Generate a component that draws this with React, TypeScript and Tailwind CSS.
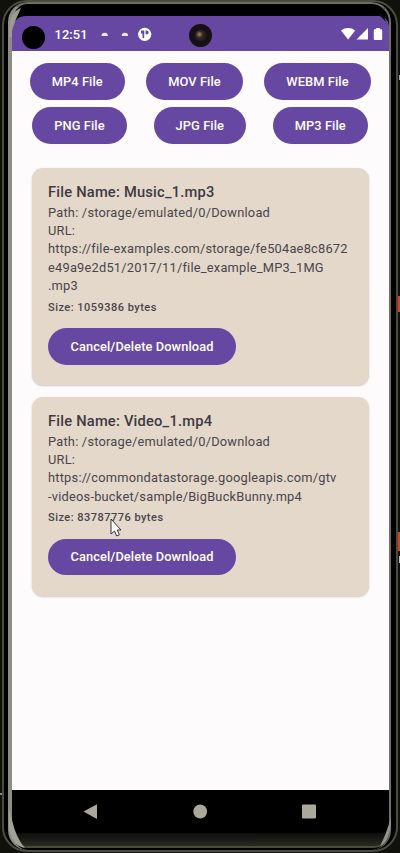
import React from "react";

function FormatButton({ label, className }: { label: string; className: string }) {
  return (
    <button
      className={`h-[36.5px] shrink-0 rounded-full bg-[#6648a3] text-[12.83px] font-medium tracking-[0.09px] whitespace-nowrap text-white ${className}`}
    >
      {label}
    </button>
  );
}

interface DownloadProps {
  name: string;
  urlLines: string[];
  size: string;
  className: string;
}

function DownloadCard({ name, urlLines, size, className }: DownloadProps) {
  return (
    <section
      className={`mx-5 rounded-[11px] bg-[#e3d8ca] px-4 pt-[13px] text-[#4a454c] shadow-[0_1px_2px_rgba(90,80,70,0.3)] ${className}`}
    >
      <h2 className="h-[22px] text-[14.67px] leading-[22px] font-medium tracking-[0.22px] whitespace-nowrap text-[#3f3a42]">
        File Name: {name}
      </h2>
      <div className="pt-[0.5px] text-[12.83px] leading-[18.4px] tracking-[0.22px] whitespace-nowrap">
        <p>Path: /storage/emulated/0/Download</p>
        <p>URL:</p>
        {urlLines.map((line) => (
          <p key={line}>{line}</p>
        ))}
      </div>
      <p className="mt-[4px] text-[11px] leading-[15px] font-medium tracking-[0.48px]">Size: {size} bytes</p>
      <button className="mt-[13.5px] block h-[36.5px] w-[188px] rounded-full bg-[#6648a3] text-[12.83px] font-medium tracking-[0.09px] whitespace-nowrap text-white">
        Cancel/Delete Download
      </button>
    </section>
  );
}

function StatusBar() {
  return (
    <header className="relative flex h-[35px] shrink-0 items-center rounded-tl-[14px] rounded-tr-[10px] bg-[#6648a3] text-white">
      <span className="mt-[8px] ml-[10px] size-[23px] rounded-full bg-black" />
      <span className="mt-[2px] ml-[9.5px] text-[12.83px] leading-[18px] font-medium tracking-[0.1px]">12:51</span>
      <svg className="ml-3 h-4 w-[56px]" viewBox="0 0 56 16" fill="none">
        <path d="M1.500 10a3.200 3.200 0 0 1 6.400 0z" fill="#eee4f7" />
        <path d="M21.700 10a3.200 3.200 0 0 1 6.400 0z" fill="#eee4f7" />
        <circle cx="44.700" cy="8.300" r="6.600" fill="white" />
        <path d="M41 4.500h3.200v7.500h-1.700v-4.500H41z" fill="#6648a3" />
        <path d="M45.500 4.500h1.200a1.900 1.900 0 0 1 0 3.800h-1.200z" fill="#6648a3" />
      </svg>
      <span className="absolute top-[8px] left-[177px] flex size-[23px] items-center justify-center rounded-full bg-[#171016]">
        <span className="size-[11px] rounded-full bg-[radial-gradient(circle_at_40%_40%,#8a7550_0_10%,#352a22_35%,#211a1c_80%)]" />
      </span>
      <svg className="mr-[6px] ml-auto h-[14px] w-[43px]" viewBox="0 0 43 14" fill="white">
        <path d="M1 3.400C5 .1 11.200.1 15.200 3.400L8.100 12.600z" />
        <path d="M28 1v11.500H16.500z" />
        <path d="M34.500 2.200h1.700V1h3.600v1.200h1.700q.7 0 .7.7v9q0 1-.9 1h-6.600q-.9 0-.9-1v-9q0-.7.7-.7z" />
      </svg>
    </header>
  );
}

function NavigationBar() {
  return (
    <nav className="h-[43px] shrink-0 bg-black">
      <svg className="block h-full w-full" viewBox="0 0 377 43" fill="#a9a89b">
        <path d="M71.500 21.500L85 14.200v14.900z" />
        <circle cx="188.200" cy="21.500" r="6.900" />
        <rect x="290" y="14.500" width="14" height="14" rx="1" />
      </svg>
    </nav>
  );
}

export default function App() {
  return (
    <div className="relative h-[853px] w-[400px] overflow-hidden bg-[#10110b] font-[Roboto,'Liberation_Sans',sans-serif]">
      <div className="mx-[2px] h-[852px] rounded-[25px] border-x-2 border-t-[2px] border-b-[2px] border-[#4b4c40] bg-black">
        <div className="mr-[5px] ml-[4px] flex h-[848px] flex-col rounded-[20px] border-t-[2px] border-r-2 border-b-0 border-l-[4px] border-t-[#6c6e62] border-r-[#707068] border-l-[#8d8d85] bg-black pt-[12px]">
          <StatusBar />
          <main className="flex h-[739px] shrink-0 flex-col bg-[#fdfbfb] pt-3">
            <div className="flex pl-[17.500px]">
              <FormatButton label="MP4 File" className="w-[95.500px]" />
              <FormatButton label="MOV File" className="ml-[21px] w-[97px]" />
              <FormatButton label="WEBM File" className="ml-[21px] w-[107px]" />
            </div>
            <div className="mt-[7.500px] flex pl-[20px]">
              <FormatButton label="PNG File" className="w-[95px]" />
              <FormatButton label="JPG File" className="ml-[26.500px] w-[92.500px]" />
              <FormatButton label="MP3 File" className="ml-[26.500px] w-[95.500px]" />
            </div>
            <DownloadCard
              className="mt-[24.500px] h-[217px] shrink-0"
              name="Music_1.mp3"
              urlLines={["https://file-examples.com/storage/fe504ae8c8672", "e49a9e2d51/2017/11/file_example_MP3_1MG", ".mp3"]}
              size="1059386"
            />
            <DownloadCard
              className="mt-3 h-[199px] shrink-0"
              name="Video_1.mp4"
              urlLines={["https://commondatastorage.googleapis.com/gtv", "-videos-bucket/sample/BigBuckBunny.mp4"]}
              size="83787776"
            />
          </main>
          <NavigationBar />
          <div className="h-[15px] shrink-0 rounded-b-[18px] border-b-2 border-[#4d4c3c] bg-linear-to-b from-[#0d0e09] to-[#292a22]" />
        </div>
      </div>

      <svg className="pointer-events-none absolute inset-0 h-full w-full" viewBox="0 0 400 853" fill="none">
        <path d="M9 37C9 20 11 12 21 8C18 15 15 20 12 31V37z" fill="#9b9b91" />
        <path d="M9 810L12 820Q16 838 25 848Q12 846 9 828z" fill="#a2a298" />
        <path d="M391 817Q386 835 380 846Q391 842 391 817z" fill="#92928a" />
        <path d="M378 13Q384 14 386 22Q381 17 378 13z" fill="#080808" />
      </svg>
      <svg className="pointer-events-none absolute top-[518px] left-[109px] h-5 w-4" viewBox="0 0 16 20">
        <path d="M2 1v15l3.500-3 2.200 5 2.700-1.200-2.200-4.800H12z" fill="white" stroke="#34313b" strokeWidth="1" />
      </svg>
      <span className="absolute top-[75px] right-0 h-[5px] w-px bg-[#aaa]" />
      <span className="absolute top-[296px] right-0 h-[16px] w-[2px] bg-[#ef3328]" />
      <span className="absolute top-[532px] right-0 h-[19px] w-[2px] bg-[#e13a25]" />
      <span className="absolute top-[556px] right-0 h-[7px] w-px bg-[#bbb]" />
      <span className="absolute top-[793px] left-0 h-[2px] w-[2px] bg-[#888]" />
    </div>
  );
}
